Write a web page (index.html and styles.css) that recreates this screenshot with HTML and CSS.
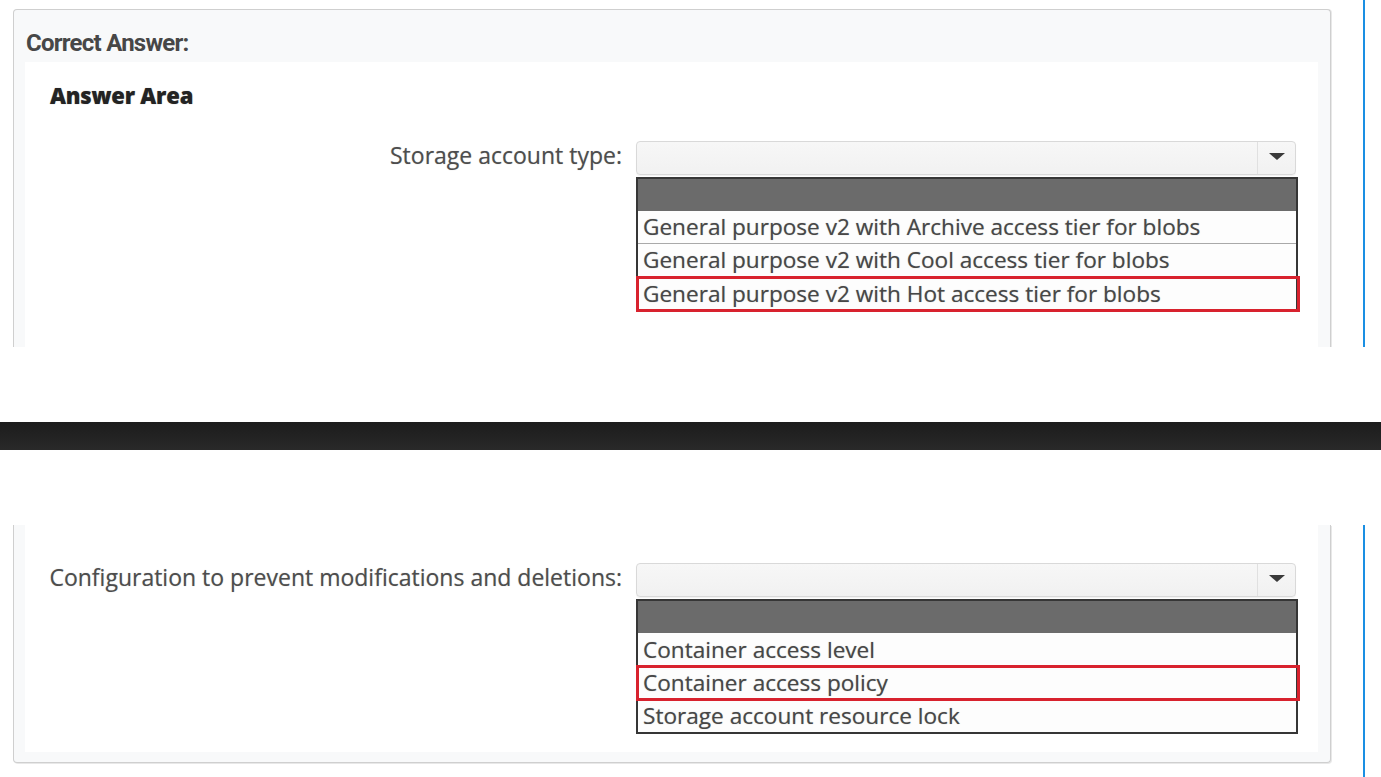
FILE: index.html
```html
<!DOCTYPE html>
<html lang="en">
<head>
<meta charset="utf-8">
<title>Correct Answer</title>
<link rel="stylesheet" href="styles.css">
</head>
<body>
<div class="page">
  <section class="seg seg-top">
    <div class="card card-top">
      <h2 class="card-title">Correct Answer:</h2>
      <div class="panel panel-top">
        <h3 class="area-title">Answer Area</h3>
        <div class="field-row">
          <div class="field-label">Storage account type:</div>
          <div class="field">
            <div class="select"><span class="select-value"></span><span class="select-btn"><span class="caret"></span></span></div>
            <ul class="options">
              <li class="opt-head"></li>
              <li class="opt opt-lined">General purpose v2 with Archive access tier for blobs</li>
              <li class="opt opt-lined">General purpose v2 with Cool access tier for blobs</li>
              <li class="opt opt-correct opt-last">General purpose v2 with Hot access tier for blobs</li>
            </ul>
          </div>
        </div>
      </div>
    </div>
    <div class="rail"></div>
  </section>

  <div class="gap"></div>
  <div class="divider"></div>
  <div class="gap"></div>

  <section class="seg seg-bottom">
    <div class="card card-bottom">
      <div class="panel panel-bottom">
        <div class="field-row">
          <div class="field-label">Configuration to prevent modifications and deletions:</div>
          <div class="field">
            <div class="select"><span class="select-value"></span><span class="select-btn"><span class="caret"></span></span></div>
            <ul class="options options-closed">
              <li class="opt-head"></li>
              <li class="opt">Container access level</li>
              <li class="opt opt-correct">Container access policy</li>
              <li class="opt">Storage account resource lock</li>
            </ul>
          </div>
        </div>
      </div>
    </div>
    <div class="rail"></div>
  </section>
</div>
</body>
</html>
```

FILE: styles.css
```css
* { box-sizing: border-box; }

html, body {
  margin: 0;
  padding: 0;
  background: #ffffff;
}

.page {
  width: 1381px;
  display: flex;
  flex-direction: column;
}

.seg {
  display: flex;
  align-items: flex-start;
  padding-left: 13px;
}

.seg-top { height: 347px; }
.seg-bottom { height: 252px; }

.card {
  width: 1318px;
  background: #f8f9fa;
  border: 1px solid #cfcfcf;
  display: flex;
  flex-direction: column;
  box-shadow: 1px 0 0 #e8e8e8;
}

.card-top {
  margin-top: 9px;
  height: 338px;
  border-bottom: none;
  border-radius: 4px 4px 0 0;
  padding: 0 12px 0 11px;
}

.card-bottom {
  height: 238px;
  border-top: none;
  border-radius: 0 0 4px 4px;
  padding: 0 12px 10px 11px;
  box-shadow: 1px 1px 0 #e8e8e8;
}

.card-title {
  margin: 0 0 6px 1px;
  padding-top: 20px;
  font-family: Roboto, "Liberation Sans", sans-serif;
  font-weight: 700;
  font-size: 24px;
  letter-spacing: -0.75px;
  line-height: 26px;
  color: #474747;
}

.panel {
  flex: 1;
  background: #ffffff;
  font-family: "Open Sans", "Noto Sans", sans-serif;
}

.panel-top { padding-top: 18px; }
.panel-bottom { padding-top: 38px; }

.area-title {
  margin: 0 0 31px 25px;
  font-family: "Open Sans", "Noto Sans", sans-serif;
  font-weight: 800;
  font-size: 22px;
  line-height: 30px;
  letter-spacing: -0.2px;
  color: #232323;
  text-shadow: 0 0 1px rgba(0, 0, 0, 0.4);
}

.field-row {
  display: flex;
  align-items: flex-start;
  padding-right: 20px;
}

.field-label {
  flex: 1;
  text-align: right;
  padding-right: 14px;
  font-size: 23px;
  line-height: 28px;
  color: #4d4d4d;
  text-shadow: 0 0 1px rgba(0, 0, 0, 0.3);
  white-space: nowrap;
}

.field {
  width: 662px;
  display: flex;
  flex-direction: column;
}

.select {
  width: 660px;
  height: 34px;
  display: flex;
  background: linear-gradient(#f7f7f7, #f1f1f1);
  border: 1px solid #d9d9d9;
  border-radius: 4px;
  box-shadow: 0 1px 1px rgba(0, 0, 0, 0.06);
}

.select-value { flex: 1; }

.select-btn {
  width: 38px;
  border-left: 1px solid #e0e0e0;
  display: flex;
  justify-content: center;
  padding-top: 11px;
}

.caret {
  width: 0;
  height: 0;
  border-left: 8px solid transparent;
  border-right: 8px solid transparent;
  border-top: 7px solid #3a3a3a;
}

.options {
  list-style: none;
  margin: 2px 0 0 0;
  padding: 0;
  border: 2px solid #363636;
  background: #fdfdfd;
}

.opt-head {
  height: 32px;
  background: #6b6b6b;
}

.opt {
  position: relative;
  height: 33px;
  padding-left: 5px;
  font-size: 22.6px;
  line-height: 33px;
  color: #474747;
  text-shadow: 0 0 1px rgba(0, 0, 0, 0.35);
  white-space: nowrap;
}

.opt-lined { border-bottom: 1px solid #a9a9a9; line-height: 32px; }

.opt-correct::after {
  content: "";
  position: absolute;
  top: -1px;
  bottom: -2px;
  left: -2px;
  right: -4px;
  border: 3px solid #d8222e;
}

.rail {
  margin-left: 32px;
  width: 2px;
  align-self: stretch;
  background: #1a8fe3;
}

.gap { height: 75px; }

.divider {
  height: 28px;
  background: linear-gradient(#1c1c1c, #292929);
}
```
